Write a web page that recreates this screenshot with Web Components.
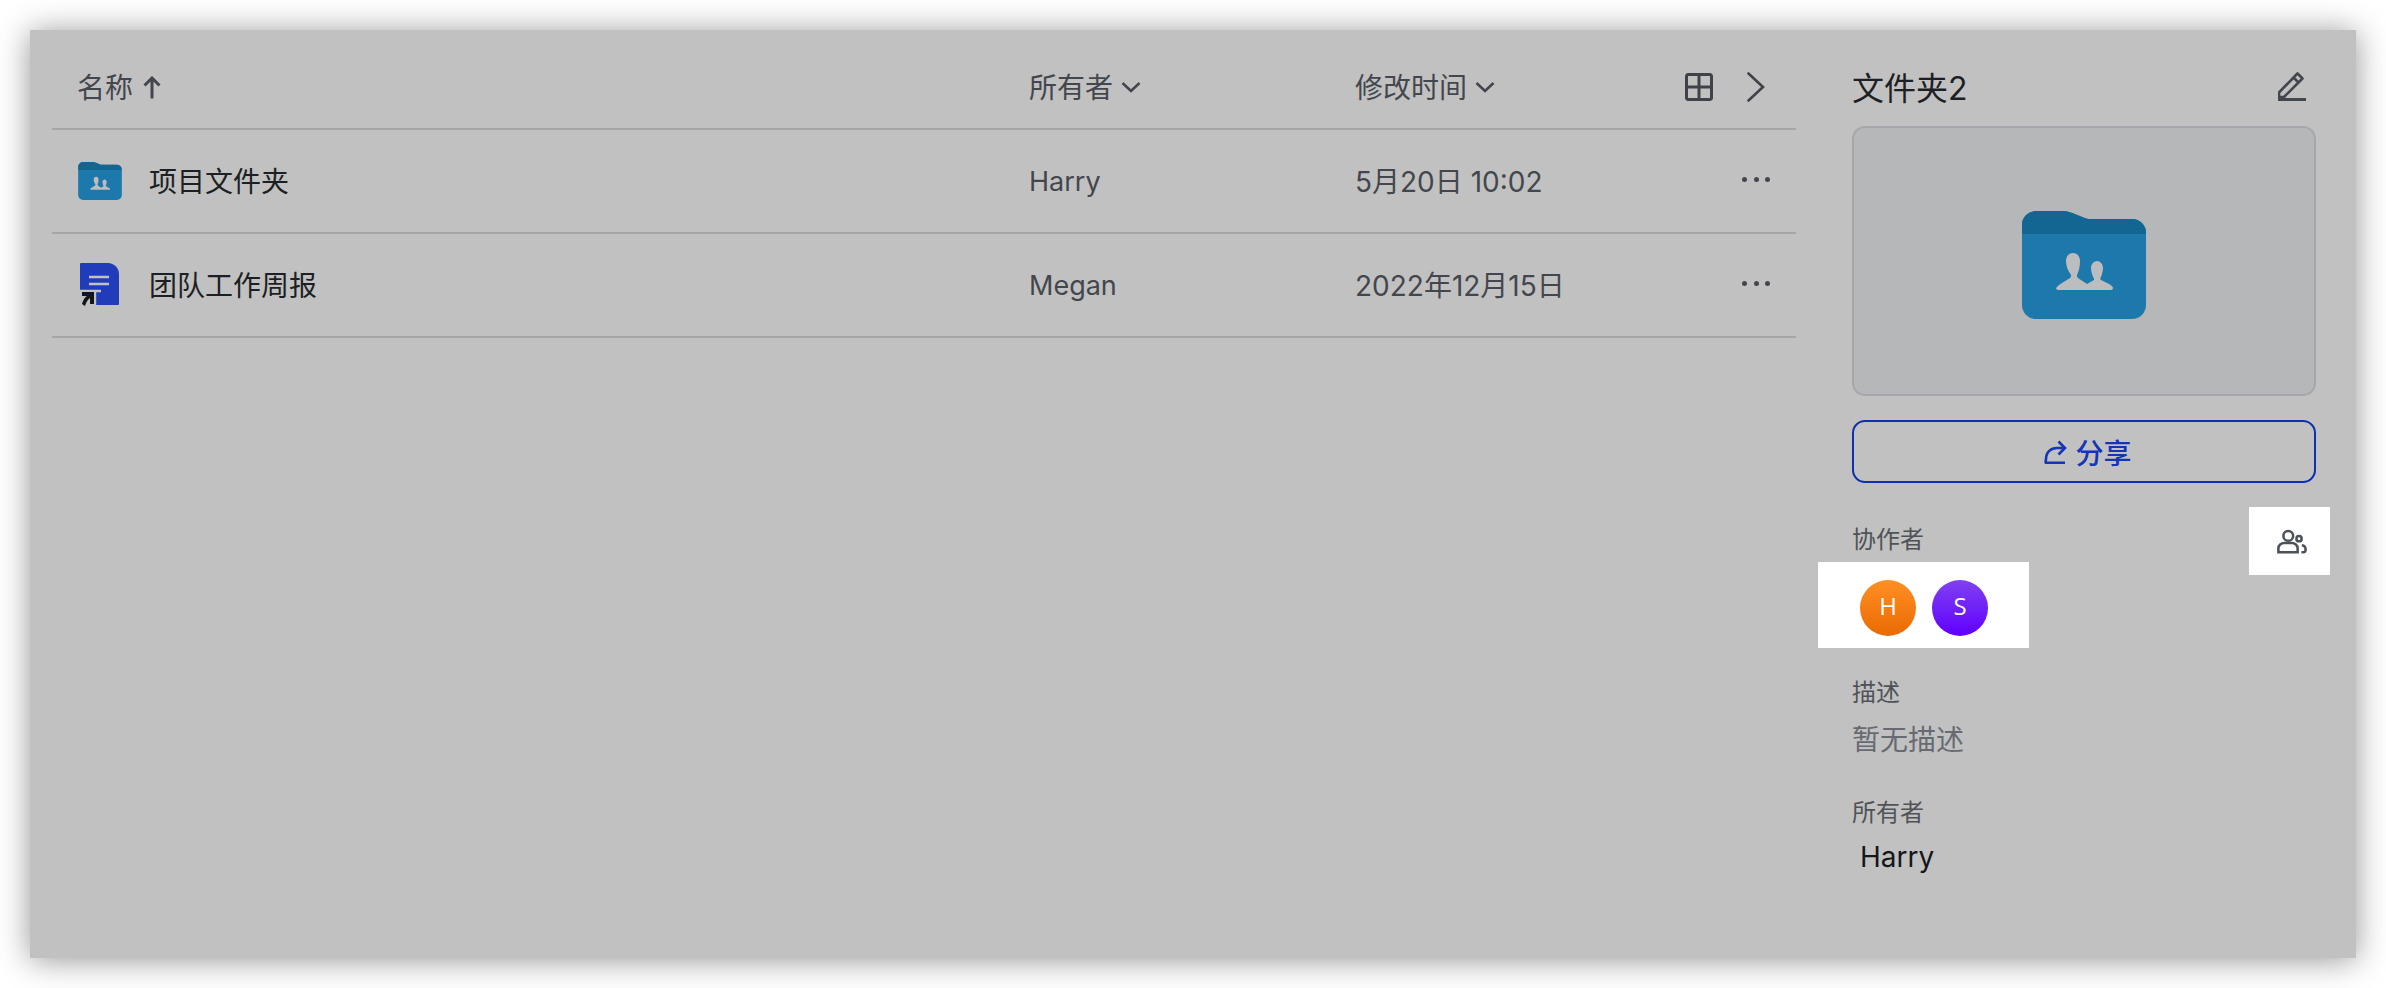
<!DOCTYPE html>
<html lang="zh">
<head>
<meta charset="utf-8">
<title>文件夹2</title>
<style>
  html, body { margin: 0; background: #fff; }
  body { font-family: Inter, "Noto Sans CJK SC", sans-serif; }
</style>
</head>
<body>
<app-shell>
  <file-table slot="main">
    <file-row name="项目文件夹" owner="Harry" time="5月20日 10:02" kind="folder"></file-row>
    <file-row name="团队工作周报" owner="Megan" time="2022年12月15日" kind="doc"></file-row>
  </file-table>
  <detail-panel slot="side" title-text="文件夹2">
    <info-block label="协作者" flush>
      <icon-overlay slot="overlay"></icon-overlay>
      <avatar-strip>
        <user-avatar letter="H" from="#ff9023" to="#ea6a03"></user-avatar>
        <user-avatar letter="S" from="#8041f0" to="#6000ff"></user-avatar>
      </avatar-strip>
    </info-block>
    <info-block label="描述" gap="28" value-gap="10">
      <span style="color:#676b71">暂无描述</span>
    </info-block>
    <info-block label="所有者" gap="36" value-gap="7">
      <span style="color:#14171a;padding-left:8px">Harry</span>
    </info-block>
  </detail-panel>
</app-shell>

<script>
const folderIcon = (w, h) => `
  <svg width="${w}" height="${h}" viewBox="0 0 124 108" style="display:block">
    <path fill="#1d78ac" d="M0 14a14 14 0 0 1 14-14H40c6 0 10 2 14 3.5L64 7.5c2 .5 3 .5 5 .5H110a14 14 0 0 1 14 14V94a14 14 0 0 1-14 14H14A14 14 0 0 1 0 94Z"/>
    <path fill="#136592" d="M0 23V14a14 14 0 0 1 14-14H40c6 0 10 2 14 3.5L64 7.5c2 .5 3 .5 5 .5H110a14 14 0 0 1 14 14v1Z"/>
    <path fill="#bcbdbf" d="M34 78c0-2 3-4 6-6l8-5c1-1 1-2 1-3-3-4-5-9-5-14 0-5 3-8 7-8s7 3 7 8c0 5-1 10-3 14 0 1 0 2 1 3l9 6 7-4c0-1 0-2-1-3-1-3-2-6-2-9 0-4 3-7 6-7s6 3 6 7c0 3-1 6-2 9-1 1-1 2 0 3l8 4c3 2 4 3 4 4 0 1-1 2-2 2H36c-1 0-2-1-2-2Z"/>
  </svg>`;

const docIcon = `
  <svg width="40" height="44" viewBox="0 0 40 44" style="display:block">
    <path fill="#203cba" d="M0 1a1 1 0 0 1 1-1H28c6 0 11 5 11 11V41a1 1 0 0 1-1 1H1a1 1 0 0 1-1-1Z"/>
    <path stroke="#c1c1c1" stroke-width="2.400" d="M9 14H29M9 21H29M0 28H21M15 28V42"/>
    <path fill="#c1c1c1" d="M0 29H14V42H0Z"/>
    <path fill="#14171a" d="M2 29H14V41H10V35C7 37 6 40 5 43L2 41C3 37 5 34 7 33L2 33Z"/>
  </svg>`;

class AppShell extends HTMLElement {
  constructor() {
    super();
    this.attachShadow({ mode: 'open' });
    this.shadowRoot.innerHTML = `
      <style>
        :host { display: block; padding: 30px; }
        .panel {
          display: flex;
          height: 928px;
          background: #c1c1c1;
          box-shadow: 0 2px 30px rgba(0,0,0,.42);
        }
        .main { width: 1744px; margin-left: 22px; flex: none; }
        .side { width: 464px; margin-left: 56px; flex: none; }
      </style>
      <div class="panel">
        <div class="main"><slot name="main"></slot></div>
        <div class="side"><slot name="side"></slot></div>
      </div>`;
  }
}

class FileTable extends HTMLElement {
  constructor() {
    super();
    this.attachShadow({ mode: 'open' });
    this.shadowRoot.innerHTML = `
      <style>
        :host { display: block; font-size: 28px; }
        .head {
          display: grid;
          grid-template-columns: 977px 326px 1fr;
          align-items: center;
          height: 82px;
          padding-top: 16px;
          border-bottom: 2px solid #a5a5a6;
          color: #43474d;
        }
        .cell { display: flex; align-items: center; gap: 8px; }
        .label { padding-bottom: 3px; }
        .first { padding-left: 25px; }
        svg { display: block; flex: none; }
        .time-wrap { display: flex; align-items: center; justify-content: space-between; padding-right: 31px; }
      </style>
      <div class="head">
        <div class="cell first"><span class="label">名称</span>
          <svg width="18" height="23" viewBox="0 0 18 23" style="margin-left:2px"><path d="M9 22.500V2M1.500 9.500L9 2l7.500 7.500" fill="none" stroke="#43474d" stroke-width="3"/></svg>
        </div>
        <div class="cell"><span class="label">所有者</span>
          <svg width="20" height="12" viewBox="0 0 20 12"><path d="M1.500 2l8.500 8 8.500-8" fill="none" stroke="#43474d" stroke-width="2.600"/></svg>
        </div>
        <div class="time-wrap">
          <div class="cell"><span class="label">修改时间</span>
            <svg width="20" height="12" viewBox="0 0 20 12"><path d="M1.500 2l8.500 8 8.500-8" fill="none" stroke="#43474d" stroke-width="2.600"/></svg>
          </div>
          <div class="cell" style="gap:34px">
            <svg width="28" height="28" viewBox="0 0 28 28"><path d="M1.500 3a1.500 1.500 0 0 1 1.500-1.500H25A1.500 1.500 0 0 1 26.500 3V25A1.500 1.500 0 0 1 25 26.500H3A1.500 1.500 0 0 1 1.500 25ZM14 1.500V26.500M1.500 14H26.500" fill="none" stroke="#3f4349" stroke-width="3"/></svg>
            <svg width="18" height="30" viewBox="0 0 18 30"><path d="M1.500 1.500L16 15 1.500 28.500" fill="none" stroke="#3f4349" stroke-width="2.600" stroke-linecap="round"/></svg>
          </div>
        </div>
      </div>
      <slot></slot>`;
  }
}

class FileRow extends HTMLElement {
  constructor() {
    super();
    this.attachShadow({ mode: 'open' });
  }
  connectedCallback() {
    const kind = this.getAttribute('kind');
    const icon = kind === 'folder' ? folderIcon(44, 38) : docIcon;
    this.shadowRoot.innerHTML = `
      <style>
        :host { display: block; }
        .row {
          display: grid;
          grid-template-columns: 977px 326px 1fr auto;
          align-items: center;
          height: 102px;
          border-bottom: 2px solid #a5a5a6;
          color: #43474d;
          font-size: 28px;
        }
        .name { display: flex; align-items: center; padding-left: 26px; color: #1c1f23; }
        .name b { font-weight: 400; padding-bottom: 3px; }
        .owner { font-size: 27px; }
        .time { padding-bottom: 3px; }
        .ico { width: 71px; display: flex; }
        .ico.doc { padding-left: 2px; width: 69px; }
        .more { display: flex; gap: 6.500px; padding: 0 26px 3px 0; }
        .more i { width: 5px; height: 5px; border-radius: 50%; background: #43474d; }
      </style>
      <div class="row">
        <div class="name"><span class="ico ${kind}">${icon}</span><b>${this.getAttribute('name')}</b></div>
        <div class="owner">${this.getAttribute('owner')}</div>
        <div class="time">${this.getAttribute('time')}</div>
        <div class="more"><i></i><i></i><i></i></div>
      </div>`;
  }
}

class DetailPanel extends HTMLElement {
  constructor() {
    super();
    this.attachShadow({ mode: 'open' });
  }
  connectedCallback() {
    this.shadowRoot.innerHTML = `
      <style>
        :host { display: block; padding-top: 36px; }
        .title {
          display: flex;
          align-items: center;
          justify-content: space-between;
          height: 42px;
          margin-bottom: 18px;
          padding-right: 10px;
          font-size: 32px;
          color: #1c1f23;
        }
        .title span { padding-bottom: 3px; }
        .card {
          display: flex;
          align-items: center;
          justify-content: center;
          box-sizing: border-box;
          height: 270px;
          padding-top: 8px;
          background: #b6b7b9;
          border: 2px solid #a6a7aa;
          border-radius: 13px;
        }
        .share {
          display: flex;
          align-items: center;
          justify-content: center;
          gap: 8px;
          box-sizing: border-box;
          height: 63px;
          margin: 24px 0 40px;
          padding-left: 8px;
          border: 2px solid #0d2fb0;
          border-radius: 13px;
          color: #1435b6;
          font-size: 28px;
          font-weight: 500;
        }
        svg { display: block; }
      </style>
      <div class="title">
        <span>${this.getAttribute('title-text')}</span>
        <svg width="28" height="30" viewBox="0 0 28 30"><path d="M1 20.500L17.500 3.500l2-2 5 5-2 2L6 25H1ZM15.500 5.500l5 5" fill="none" stroke="#43474d" stroke-width="2.600" stroke-linejoin="round"/><path d="M0 27.500H28" stroke="#43474d" stroke-width="3"/></svg>
      </div>
      <div class="card">${folderIcon(124, 108)}</div>
      <div class="share">
        <svg width="23" height="24" viewBox="0 0 23 24"><path d="M2 23c-1-1 0-2 0-4 0-7 5-11 11-11h8M14.500 1.500L21 8l-6.500 6.500M1 22.700H21" fill="none" stroke="#1435b6" stroke-width="2.600"/></svg>
        <span>分享</span>
      </div>
      <slot></slot>`;
  }
}

class InfoBlock extends HTMLElement {
  constructor() {
    super();
    this.attachShadow({ mode: 'open' });
  }
  connectedCallback() {
    const gap = this.getAttribute('gap') || 0;
    const valueGap = this.getAttribute('value-gap') || 5;
    this.shadowRoot.innerHTML = `
      <style>
        :host { display: block; position: relative; margin-top: ${gap}px; }
        .label { font-size: 24px; line-height: 34px; color: #4f5358; }
        .value { margin-top: ${valueGap}px; font-size: 28px; line-height: 40px; }
        :host([flush]) .value { line-height: normal; }
      </style>
      <slot name="overlay"></slot>
      <div class="label">${this.getAttribute('label')}</div>
      <div class="value"><slot></slot></div>`;
  }
}

class IconOverlay extends HTMLElement {
  constructor() {
    super();
    this.attachShadow({ mode: 'open' });
    this.shadowRoot.innerHTML = `
      <style>
        :host {
          position: absolute;
          top: -16px;
          right: -14px;
          width: 81px;
          height: 68px;
          display: flex;
          align-items: center;
          justify-content: center;
          background: #fff;
        }
      </style>
      <svg width="30" height="25" viewBox="0 0 32 26" style="display:block;margin-left:4px">
        <g fill="none" stroke="#4d5258" stroke-width="2.700">
          <circle cx="12" cy="7" r="5.200"/>
          <path d="M1.500 24.500V20c0-3 3-5.500 6-5.500H16c3 0 6 2.500 6 5.500v4.500Z"/>
          <circle cx="23.500" cy="10" r="2.800"/>
          <path d="M26.500 17c2.500.3 4 2 4 4.500 0 1.500-.5 3-2.500 3h-2"/>
        </g>
      </svg>`;
  }
}

class AvatarStrip extends HTMLElement {
  constructor() {
    super();
    this.attachShadow({ mode: 'open' });
    this.shadowRoot.innerHTML = `
      <style>
        :host {
          display: flex;
          gap: 16px;
          box-sizing: border-box;
          width: 211px;
          height: 86px;
          margin-left: -34px;
          padding: 18px 0 0 42px;
          background: #fff;
        }
      </style>
      <slot></slot>`;
  }
}

class UserAvatar extends HTMLElement {
  constructor() {
    super();
    this.attachShadow({ mode: 'open' });
  }
  connectedCallback() {
    this.shadowRoot.innerHTML = `
      <style>
        :host {
          display: flex;
          align-items: center;
          justify-content: center;
          box-sizing: border-box;
          width: 56px;
          height: 56px;
          padding-bottom: 4px;
          border-radius: 50%;
          color: #fff;
          font-size: 24px;
          line-height: 1;
          font-family: "Open Sans", sans-serif;
          background: linear-gradient(${this.getAttribute('from')}, ${this.getAttribute('to')});
        }
      </style>
      ${this.getAttribute('letter')}`;
  }
}

customElements.define('app-shell', AppShell);
customElements.define('file-table', FileTable);
customElements.define('file-row', FileRow);
customElements.define('detail-panel', DetailPanel);
customElements.define('info-block', InfoBlock);
customElements.define('icon-overlay', IconOverlay);
customElements.define('avatar-strip', AvatarStrip);
customElements.define('user-avatar', UserAvatar);
</script>
</body>
</html>
